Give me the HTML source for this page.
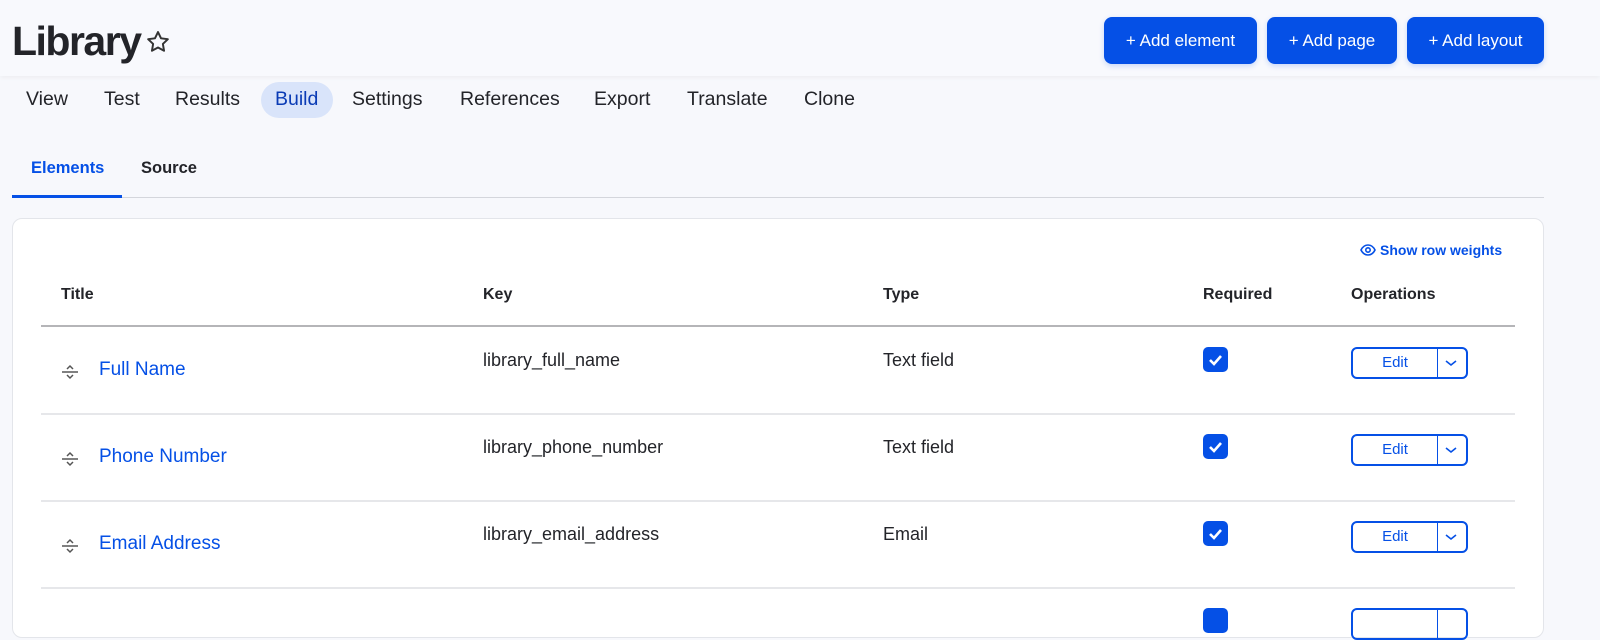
<!DOCTYPE html>
<html><head><style>
*{box-sizing:border-box;margin:0;padding:0}
body{width:1600px;height:626px;overflow:hidden;background:#f7f8fc;font-family:"Liberation Sans",Arial,sans-serif;color:#232429;position:relative}
.a{position:absolute;white-space:nowrap}
.btn{position:absolute;top:17px;height:47px;background:#0550e6;color:#fff;border-radius:8px;font-size:17px;line-height:47px;text-align:center;box-shadow:0 2px 6px rgba(5,80,230,.2)}
.tab{position:absolute;top:87px;font-size:19.5px;line-height:24px}
.th{position:absolute;top:285px;font-size:16px;font-weight:bold;line-height:20px}
.link{color:#0550e6;font-size:19px}
.td{font-size:18px}
.cb{position:absolute;width:25px;height:25px;background:#0550e6;border-radius:5px}
.edit{position:absolute;width:117px;height:32px;border:2px solid #0550e6;border-radius:6px;color:#0550e6;font-size:15px;line-height:28px}
.edit span{position:absolute;left:0;width:84px;text-align:center}
.edit i{position:absolute;left:84px;top:0;bottom:0;border-left:1.5px solid #0550e6}
.line{position:absolute;left:41px;width:1474px;height:2px;background:#e6e7ea}
</style></head><body>
<div style="position:absolute;left:0;top:0;width:1600px;height:76px;background:#f8f9fd;box-shadow:0 2px 4px rgba(0,0,0,.04)"></div>
<div class="a" style="left:12px;top:16px;font-size:41px;font-weight:bold;letter-spacing:-1.5px;line-height:50px">Library</div>
<svg class="a" style="left:145px;top:29px" width="26" height="26" viewBox="0 0 24 24"><path d="M12 2.8l2.8 5.8 6.3.8-4.6 4.4 1.1 6.3L12 17.1l-5.6 3 1.1-6.3L2.9 9.4l6.3-.8z" fill="none" stroke="#333" stroke-width="1.8" stroke-linejoin="round"/></svg>
<div class="btn" style="left:1104px;width:153px">+ Add element</div>
<div class="btn" style="left:1267px;width:130px">+ Add page</div>
<div class="btn" style="left:1407px;width:137px">+ Add layout</div>
<div class="a" style="left:261px;top:82px;width:72px;height:36px;background:#d9e4fa;border-radius:18px"></div>
<div class="tab" style="left:26px">View</div>
<div class="tab" style="left:104px">Test</div>
<div class="tab" style="left:175px">Results</div>
<div class="tab" style="left:275px;color:#0a3bb5">Build</div>
<div class="tab" style="left:352px">Settings</div>
<div class="tab" style="left:460px">References</div>
<div class="tab" style="left:594px">Export</div>
<div class="tab" style="left:687px">Translate</div>
<div class="tab" style="left:804px">Clone</div>
<div class="a" style="left:31px;top:159px;font-size:16.5px;font-weight:bold;color:#0550e6">Elements</div>
<div class="a" style="left:141px;top:159px;font-size:16.5px;font-weight:bold">Source</div>
<div class="a" style="left:12px;top:197px;width:1532px;height:1px;background:#d4d6dc"></div>
<div class="a" style="left:12px;top:195px;width:110px;height:3px;background:#0550e6"></div>
<div class="a" style="left:12px;top:218px;width:1532px;height:420px;background:#fff;border:1px solid #e3e5ea;border-radius:10px"></div>
<svg class="a" style="left:1360px;top:243px" width="16" height="14" viewBox="0 0 16 14"><path d="M1 7C3 3 5.5 2 8 2s5 1 7 5c-2 4-4.5 5-7 5S3 11 1 7z" fill="none" stroke="#0550e6" stroke-width="1.6"/><circle cx="8" cy="7" r="2.2" fill="none" stroke="#0550e6" stroke-width="1.6"/></svg>
<div class="a" style="left:1380px;top:242px;font-size:14px;font-weight:bold;color:#0550e6">Show row weights</div>
<div class="th" style="left:61px">Title</div>
<div class="th" style="left:483px">Key</div>
<div class="th" style="left:883px">Type</div>
<div class="th" style="left:1203px">Required</div>
<div class="th" style="left:1351px">Operations</div>
<div class="line" style="top:325px;background:#b5b5b8"></div>
<div class="line" style="top:413px"></div>
<div class="line" style="top:500px"></div>
<div class="line" style="top:587px"></div>
<svg class="a" style="left:60px;top:362px" width="20" height="20" viewBox="0 0 20 20"><path d="M7 7l3-3 3 3M7 13l3 3 3-3" fill="none" stroke="#555" stroke-width="1.5"/><path d="M2 10h16" stroke="#555" stroke-width="1.5"/></svg>
<svg class="a" style="left:60px;top:449px" width="20" height="20" viewBox="0 0 20 20"><path d="M7 7l3-3 3 3M7 13l3 3 3-3" fill="none" stroke="#555" stroke-width="1.5"/><path d="M2 10h16" stroke="#555" stroke-width="1.5"/></svg>
<svg class="a" style="left:60px;top:536px" width="20" height="20" viewBox="0 0 20 20"><path d="M7 7l3-3 3 3M7 13l3 3 3-3" fill="none" stroke="#555" stroke-width="1.5"/><path d="M2 10h16" stroke="#555" stroke-width="1.5"/></svg>
<div class="a link" style="left:99px;top:359px">Full Name</div>
<div class="a link" style="left:99px;top:446px">Phone Number</div>
<div class="a link" style="left:99px;top:533px">Email Address</div>
<div class="a td" style="left:483px;top:350px">library_full_name</div>
<div class="a td" style="left:483px;top:437px">library_phone_number</div>
<div class="a td" style="left:483px;top:524px">library_email_address</div>
<div class="a td" style="left:883px;top:350px">Text field</div>
<div class="a td" style="left:883px;top:437px">Text field</div>
<div class="a td" style="left:883px;top:524px">Email</div>
<div class="cb" style="left:1203px;top:347px"><svg width="25" height="25"><path d="M7 13l4 4 7-8" fill="none" stroke="#fff" stroke-width="2.6"/></svg></div>
<div class="cb" style="left:1203px;top:434px"><svg width="25" height="25"><path d="M7 13l4 4 7-8" fill="none" stroke="#fff" stroke-width="2.6"/></svg></div>
<div class="cb" style="left:1203px;top:521px"><svg width="25" height="25"><path d="M7 13l4 4 7-8" fill="none" stroke="#fff" stroke-width="2.6"/></svg></div>
<div class="cb" style="left:1203px;top:608px"></div>
<div class="edit" style="left:1351px;top:347px"><span>Edit</span><i></i><svg style="position:absolute;left:92px;top:9px" width="12" height="10"><path d="M1 3l5 4 5-4" fill="none" stroke="#0550e6" stroke-width="1.6"/></svg></div>
<div class="edit" style="left:1351px;top:434px"><span>Edit</span><i></i><svg style="position:absolute;left:92px;top:9px" width="12" height="10"><path d="M1 3l5 4 5-4" fill="none" stroke="#0550e6" stroke-width="1.6"/></svg></div>
<div class="edit" style="left:1351px;top:521px"><span>Edit</span><i></i><svg style="position:absolute;left:92px;top:9px" width="12" height="10"><path d="M1 3l5 4 5-4" fill="none" stroke="#0550e6" stroke-width="1.6"/></svg></div>
<div class="edit" style="left:1351px;top:608px"><i></i></div>
</body></html>
